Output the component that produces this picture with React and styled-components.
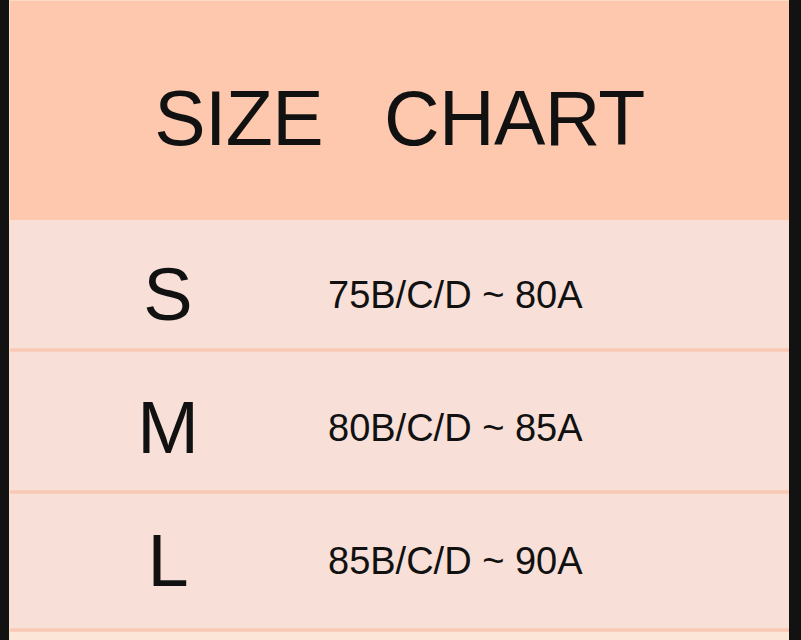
import React from "react";
import styled, { createGlobalStyle } from "styled-components";

const GlobalStyle = createGlobalStyle`
  html, body {
    margin: 0;
    padding: 0;
    background: #121212;
    font-family: "Liberation Sans", Arial, sans-serif;
    color: #111;
  }
`;

const Frame = styled.div`
  width: 779px;
  height: 640px;
  margin-left: 9px;
  border-left: 1px solid #f6e3cf;
  background: #fce6d8;
  display: flex;
  flex-direction: column;
  overflow: hidden;
`;

const Header = styled.div`
  height: 220px;
  flex-shrink: 0;
  box-sizing: border-box;
  border-top: 1px solid #fdd9c8;
  background: #fdc8ae;
  display: flex;
  justify-content: center;
  align-items: center;
  gap: 61px;
  padding-top: 16px;
`;

const Title = styled.span`
  font-size: 77px;
  line-height: 1;
  letter-spacing: -0.6px;
`;

const Row = styled.div`
  height: ${(p) => p.h}px;
  flex-shrink: 0;
  box-sizing: border-box;
  padding-top: ${(p) => p.shift * 2}px;
  background: #f8e0d8;
  display: grid;
  grid-template-columns: 316px 1fr;
  align-items: center;
`;

const Sep = styled.div`
  height: 4px;
  flex-shrink: 0;
  background: linear-gradient(#f9d3c3, #f7c4ae 50%, #f9d3c3);
`;

const SizeLetter = styled.div`
  font-size: 74px;
  line-height: 1;
  text-align: center;
`;

const Range = styled.div`
  font-size: 38px;
  line-height: 1;
  padding-left: 2px;
`;

const rows = [
  { size: "S", range: "75B/C/D ~ 80A", h: 128, shift: 11 },
  { size: "M", range: "80B/C/D ~ 85A", h: 138, shift: 7 },
  { size: "L", range: "85B/C/D ~ 90A", h: 134, shift: 0 },
];

export default function App() {
  return (
    <>
      <GlobalStyle />
      <Frame>
        <Header>
          <Title>SIZE</Title>
          <Title>CHART</Title>
        </Header>
        {rows.map((r) => (
          <React.Fragment key={r.size}>
            <Row h={r.h} shift={r.shift}>
              <SizeLetter>{r.size}</SizeLetter>
              <Range>{r.range}</Range>
            </Row>
            <Sep />
          </React.Fragment>
        ))}
      </Frame>
    </>
  );
}
